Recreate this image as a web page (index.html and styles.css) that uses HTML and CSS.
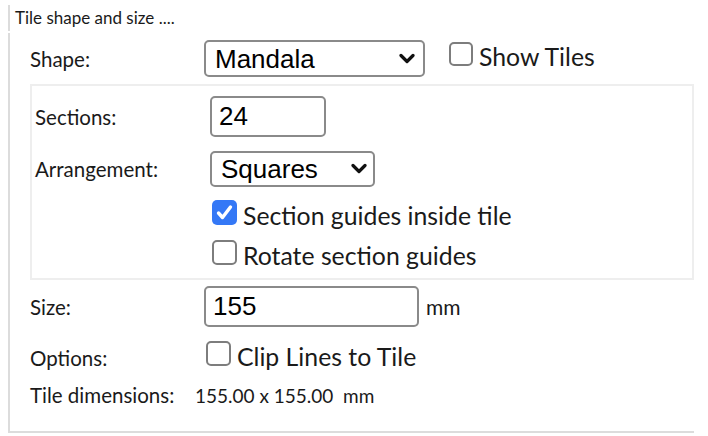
FILE: index.html
```html
<!DOCTYPE html>
<html>
<head>
<meta charset="utf-8">
<link rel="stylesheet" href="styles.css">
</head>
<body>
<div class="panel">
  <div class="legend">Tile shape and size ....</div>
  <div class="box">
    <div class="row row-shape">
      <span class="lbl lbl-outer">Shape:</span>
      <div class="sel sel-shape">
        <select><option>Mandala</option></select>
        <svg class="chev" width="16" height="11" viewBox="0 0 16 11"><path d="M2 2.5 L8 8.5 L14 2.5" fill="none" stroke="#111" stroke-width="3.2" stroke-linecap="round" stroke-linejoin="round"/></svg>
      </div>
      <label class="chk chk-show"><span class="cb"></span>Show Tiles</label>
    </div>

    <div class="inner">
      <div class="row row-sec">
        <span class="lbl lbl-inner">Sections:</span>
        <input class="txt txt-sec" type="text" value="24">
      </div>
      <div class="row row-arr">
        <span class="lbl lbl-inner">Arrangement:</span>
        <div class="sel sel-arr">
          <select><option>Squares</option></select>
          <svg class="chev" width="16" height="11" viewBox="0 0 16 11"><path d="M2 2.5 L8 8.5 L14 2.5" fill="none" stroke="#111" stroke-width="3.2" stroke-linecap="round" stroke-linejoin="round"/></svg>
        </div>
      </div>
      <label class="chk chk-row chk-1"><span class="cb on"><svg width="25" height="25" viewBox="0 0 25 25"><path d="M6.5 13 L10.5 17.5 L18.5 7" fill="none" stroke="#fff" stroke-width="3.4" stroke-linecap="round" stroke-linejoin="round"/></svg></span>Section guides inside tile</label>
      <label class="chk chk-row chk-2"><span class="cb"></span>Rotate section guides</label>
    </div>

    <div class="row row-size">
      <span class="lbl lbl-outer">Size:</span>
      <input class="txt txt-size" type="text" value="155">
      <span class="unit">mm</span>
    </div>
    <div class="row-opt">
      <span class="lbl lbl-opt">Options:</span><label class="chk"><span class="cb"></span>Clip Lines to Tile</label>
    </div>
    <div class="row-dim">
      <span class="lbl lbl-dim">Tile dimensions:</span><span class="dim">155.00 x 155.00&nbsp;&nbsp;mm</span>
    </div>
  </div>
</div>
</body>
</html>
```

FILE: styles.css
```css
* { box-sizing: border-box; }
html, body { margin: 0; padding: 0; background: #fff; }
body {
  font-family: "Lato", "Open Sans", sans-serif;
  color: #1a1a1a;
  width: 708px;
  height: 436px;
  overflow: hidden;
}
.panel {
  margin: 5px 0 0 8px;
  width: 686px;
}
.legend {
  border-left: 2px solid #dcdcdc;
  height: 26px;
  line-height: 26px;
  padding-left: 5px;
  font-size: 17px;
}
.box {
  margin-top: 2px;
  border-left: 2px solid #dcdcdc;
  border-bottom: 2px solid #dcdcdc;
  height: 400px;
  padding: 7px 0 0 20px;
}
.row {
  display: flex;
  align-items: center;
}
.lbl { font-size: 20.5px; flex: none; }
.lbl-outer { width: 174px; }
.lbl-inner { width: 176px; padding-left: 1px; }

.row-shape { height: 37px; }
.sel { position: relative; flex: none; }
.sel select {
  appearance: none;
  -webkit-appearance: none;
  width: 100%;
  height: 100%;
  border: 2px solid #8a8a8a;
  border-radius: 5px;
  background: #fff;
  font-family: "Liberation Sans", Arial, sans-serif;
  font-size: 26px;
  color: #000;
  padding: 0 0 0 9px;
  margin: 0;
  outline: none;
}
.sel .chev { position: absolute; top: 50%; margin-top: -6px; right: 10px; }
.sel-shape { width: 221px; height: 37px; }
.sel-arr { width: 165px; height: 36px; }
.sel-arr .chev { right: 8px; }

.chk { font-size: 24.8px; white-space: nowrap; }
.cb {
  display: inline-block;
  overflow: hidden;
  vertical-align: baseline;
  width: 25px;
  height: 25px;
  border: 2px solid #7d7d7d;
  border-radius: 5px;
  background: #fff;
  margin-right: 6px;
}
.cb.on { background: #3478f6; border: none; }
.cb svg { display: block; }
.chk-show { margin-left: 24px; align-self: flex-start; margin-top: 2px; line-height: 24px; height: 25px; }
.chk-show .cb { width: 24px; height: 24px; }

.inner {
  margin-top: 7px;
  border: 2px solid #eeeeee;
  padding: 10px 0 13px 2px;
}
.row-sec { height: 41px; }
.txt {
  font-family: "Liberation Sans", Arial, sans-serif;
  font-size: 26px;
  color: #000;
  border: 2px solid #8a8a8a;
  border-radius: 5px;
  padding: 0 0 0 7px;
  margin: 0;
  outline: none;
  flex: none;
}
.txt-sec { width: 116px; height: 41px; }
.row-arr { height: 36px; margin-top: 14px; }
.chk-row {
  display: block;
  height: 25px;
  line-height: 25px;
  padding-left: 178px;
}
.chk-1 { margin-top: 13px; }
.chk-2 { margin-top: 15px; }

.row-size { height: 41px; margin-top: 6px; }
.txt-size { width: 215px; height: 41px; }
.unit { font-size: 21px; margin-left: 7px; }

.row-opt {
  margin-top: 14px;
  height: 25px;
  line-height: 25px;
}
.lbl-opt { display: inline-block; width: 176px; }

.row-dim {
  margin-top: 17px;
  height: 24px;
  line-height: 24px;
}
.lbl-dim { display: inline-block; width: 165px; }
.dim { font-size: 19px; }
```
